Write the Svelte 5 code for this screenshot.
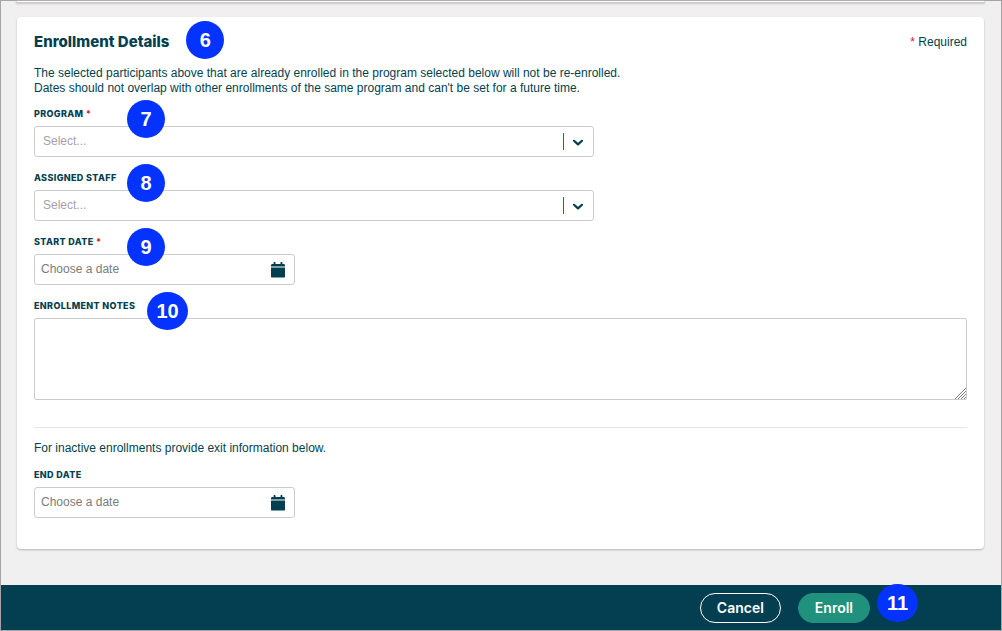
<script>
    let program = $state("");
    let staff = $state("");
    let startDate = $state("");
    let endDate = $state("");
    let notes = $state("");

    function reset() {
        program = "";
        staff = "";
        startDate = "";
        endDate = "";
        notes = "";
    }
</script>

{#snippet chevron()}
    <svg class="chevron" viewBox="0 0 12 8" width="12" height="8" aria-hidden="true">
        <path d="M2 1.8 L6 5.4 L10 1.8" fill="none" stroke="currentColor" stroke-width="2.2" stroke-linecap="round" stroke-linejoin="round" />
    </svg>
{/snippet}

{#snippet calendar()}
    <svg viewBox="0 0 14 16" width="14" height="16" aria-hidden="true">
        <path fill="currentColor" d="M0 4.4V3.4Q0 2 1.4 2H2.6V.4Q2.6 0 3 0H4.1Q4.5 0 4.5 .4V2H9.5V.4Q9.5 0 9.9 0H11Q11.4 0 11.4 .4V2H12.6Q14 2 14 3.4V4.4Z" />
        <path fill="currentColor" d="M0 5.4H14V14.4Q14 15.6 12.6 15.6H1.4Q0 15.6 0 14.4Z" />
    </svg>
{/snippet}

<div class="page">
    <div class="previous-panel"></div>

    <form id="enrollment" class="card" onsubmit={(e) => e.preventDefault()}>
        <header>
            <h2>Enrollment Details <span class="step beside">6</span></h2>
            <span class="required-note"><span class="star">*</span> Required</span>
        </header>

        <p class="intro">
            The selected participants above that are already enrolled in the program selected below will not be re-enrolled.<br />
            Dates should not overlap with other enrollments of the same program and can't be set for a future time.
        </p>

        <div class="fields">
            <div class="field">
                <label for="program">Program <span class="star">*</span></label>
                <div class="select-box">
                    <select id="program" bind:value={program} class:empty={!program}>
                        <option value="">Select...</option>
                    </select>
                    {@render chevron()}
                </div>
                <span class="step">7</span>
            </div>

            <div class="field">
                <label for="staff">Assigned Staff</label>
                <div class="select-box">
                    <select id="staff" bind:value={staff} class:empty={!staff}>
                        <option value="">Select...</option>
                    </select>
                    {@render chevron()}
                </div>
                <span class="step">8</span>
            </div>

            <div class="field">
                <label for="start-date">Start Date <span class="star">*</span></label>
                <div class="date-box">
                    <input id="start-date" type="text" placeholder="Choose a date" bind:value={startDate} />
                    <button type="button" class="icon-button" aria-label="Open calendar">{@render calendar()}</button>
                </div>
                <span class="step">9</span>
            </div>

            <div class="field">
                <label for="notes">Enrollment Notes</label>
                <div class="notes-box">
                    <textarea id="notes" bind:value={notes}></textarea>
                    <svg class="grip" viewBox="0 0 12 12" width="12" height="12" aria-hidden="true">
                        <path d="M1 12 L12 1 M4 12 L12 4 M7 12 L12 7 M10 12 L12 10" stroke="#777" stroke-width="1" />
                    </svg>
                </div>
                <span class="step wide">10</span>
            </div>
        </div>

        <hr />

        <p class="exit-info">For inactive enrollments provide exit information below.</p>

        <div class="field">
            <label for="end-date">End Date</label>
            <div class="date-box">
                <input id="end-date" type="text" placeholder="Choose a date" bind:value={endDate} />
                <button type="button" class="icon-button" aria-label="Open calendar">{@render calendar()}</button>
            </div>
        </div>
    </form>

    <footer>
        <button type="button" class="action cancel" onclick={reset}>Cancel</button>
        <button type="submit" class="action enroll" form="enrollment">Enroll</button>
        <span class="step wide last">11</span>
    </footer>
</div>

<style>
    :global(body) { margin: 0; background: #f0f0f0; }
    .page {
        box-sizing: border-box;
        min-height: 100vh;
        display: flex;
        flex-direction: column;
        border: 1px solid #a6a3a5;
        font-family: "Liberation Sans", Arial, sans-serif;
        font-size: 12px;
        line-height: 15px;
        color: #033f50;
    }

    .previous-panel { height: 1px; margin: 0 17px 0 16px; background: #fff; box-shadow: 0 1px 2px 1px #c9c6c9; }
    .card {
        margin: 15px 17px 36px 16px;
        padding: 15px 17px 31px;
        background: #fff;
        border-radius: 4px;
        box-shadow: 0 1px 2px rgb(0 0 0 / 0.25);
    }

    header { display: flex; justify-content: space-between; align-items: center; }
    h2 { position: relative; margin: 0; font: 800 15px/20px Inter, sans-serif; }
    .star { color: #d8232a; }
    p { margin: 0; }
    .intro { margin-top: 14px; }

    .fields { display: grid; gap: 13px; margin-top: 10px; }
    .field { position: relative; display: grid; gap: 4px; }
    label { font: 800 9px/16px Inter, sans-serif; text-transform: uppercase; letter-spacing: 0.04em; }

    .select-box, .date-box {
        box-sizing: border-box;
        position: relative;
        display: flex;
        height: 31px;
        border: 1px solid #ccc;
        border-radius: 3px;
        background: #fff;
    }
    .select-box { width: 100%; max-width: 560px; }
    .date-box { width: 100%; max-width: 261px; }
    select, input, textarea { border: 0; background: none; font: inherit; color: inherit; outline: none; }
    select { flex: 1; appearance: none; padding: 0 40px 0 8px; }
    select.empty { color: #a3a3a3; }
    .select-box::after { content: ""; position: absolute; right: 29px; top: 6px; bottom: 6px; width: 1px; background: #2c6070; }
    .chevron { position: absolute; right: 9px; top: 12px; pointer-events: none; }
    input { flex: 1; min-width: 0; padding: 0 6px; }
    input::placeholder { color: #7b7b7b; }
    .icon-button { display: flex; align-items: center; padding: 0 9px; border: 0; background: none; color: #033f50; cursor: pointer; }

    .notes-box { position: relative; display: flex; }
    textarea { box-sizing: border-box; width: 100%; height: 82px; padding: 8px; border: 1px solid #ccc; border-radius: 2px; resize: vertical; }
    .grip { position: absolute; right: 1px; bottom: 1px; background: #fff; pointer-events: none; }

    hr { margin: 27px 0 13px; border: 0; border-top: 1px solid #e6e6e6; }
    .exit-info { margin-bottom: 11px; }

    footer {
        position: relative;
        flex: 1;
        display: flex;
        justify-content: flex-end;
        align-items: center;
        gap: 17px;
        min-height: 44px;
        padding-right: 131px;
        background: #033f50;
    }
    .action { box-sizing: border-box; height: 30px; padding: 0 16px; border: 1px solid #fff; border-radius: 15px; background: none; color: #fff; font: 600 14px Inter, sans-serif; cursor: pointer; }
    .enroll { border-color: #1f917c; background: #1f917c; }

    /* numbered walkthrough markers */
    .step {
        position: absolute;
        top: -6px;
        left: 93px;
        width: 38px;
        height: 38px;
        border-radius: 50%;
        background: #0433ff;
        color: #fff;
        font: bold 20px/38px "Liberation Sans", Arial, sans-serif;
        text-align: center;
    }
    .step.wide { left: 113px; width: 41px; }
    .step.beside { top: -11px; left: 100%; margin-left: 17px; }
    .step.last { top: -1px; left: auto; right: 83px; }
</style>
